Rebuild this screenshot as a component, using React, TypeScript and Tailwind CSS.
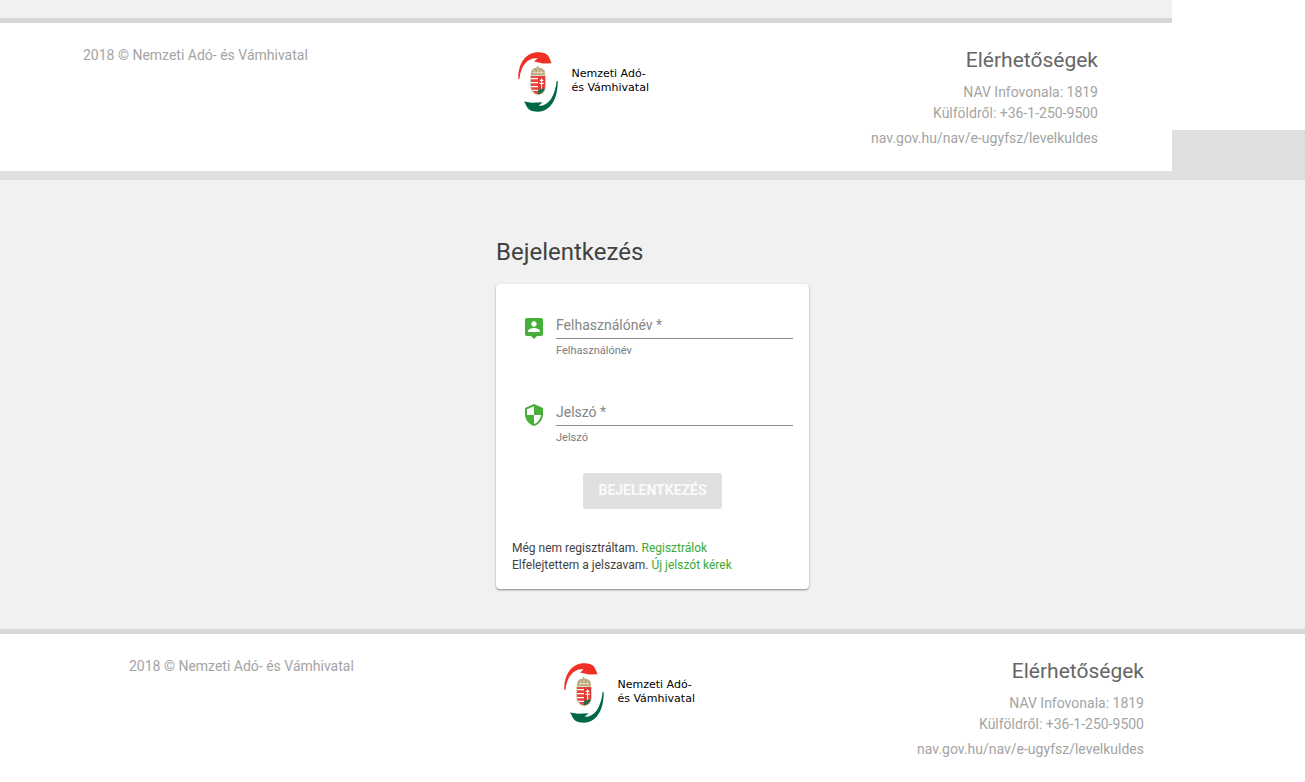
function Emblem() {
  return (
    <svg viewBox="0 0 40 60" className="h-[60px] w-10 shrink-0" aria-hidden="true">
      <path d="M0.3 27C0 10 9 0.3 20 0.3C26.5 0.3 30 2.4 31.4 6L33.6 11.2L25 11.4L16 9.6L19.6 6.4C10 5.4 3 13 1.4 27Z" fill="#ef3125" />
      <path d="M39.7 29C40 49 31 59.7 20 59.7C13 59.7 9.4 57.2 8 53L6 49.4L14 50.8L24.6 50.2L20.6 53.8C30 54.6 37 45 38.6 29Z" fill="#006747" />
      <path d="M13 23L13.4 18.6Q16 15.4 19 15.6V14H20.4V15.6Q24 15.4 26.6 18.6L27 23Z" fill="#b9a97c" />
      <path d="M14.5 20.6H25.6M16.6 18.2V22M20 16.5V22M23.4 18.2V22" stroke="#efe7cd" strokeWidth="0.7" />
      <path d="M13 24H20V42.5C15.5 41.5 13 38.5 13 34Z" fill="#e8423b" />
      <path d="M13 26.6H20M13 30.6H20M13 34.6H20M14.2 38.4H20" stroke="#fff" strokeWidth="1.3" />
      <path d="M20 24H27V34C27 38.5 24.5 41.5 20 42.5Z" fill="#df3931" />
      <path d="M20 38.5L23.5 36.4L27 36.4C26.4 40 23.6 42 20 42.5Z" fill="#22704b" />
      <path d="M23.6 26.2V36.8M21.8 28.4H25.4M21.2 31.2H26" stroke="#fff" strokeWidth="1.1" />
      <path d="M12.5 23.7H27.5V34C27.5 39 24.5 42 20 43C15.5 42 12.5 39 12.5 34Z" fill="none" stroke="#c6b489" strokeWidth="0.6" />
    </svg>
  );
}

function Footer({ inset }: { inset: string }) {
  return (
    <footer className="border-t-[5px] border-[#d7d7d7] bg-white">
      <div className={`flex h-[148px] items-start justify-between pt-[22px] text-sm text-[#a4a4a4] ${inset}`}>
        <p className="leading-5">2018 © Nemzeti Adó- és Vámhivatal</p>
        <div className="flex w-[142px] items-start gap-[13px] pt-[7px]">
          <Emblem />
          <p className="pt-[15px] font-['DejaVu_Sans',sans-serif] text-[11px] leading-[14px] whitespace-nowrap text-black">
            Nemzeti Adó-
            <br />
            és Vámhivatal
          </p>
        </div>
        <div className="text-right">
          <h2 className="text-[21px] leading-[30px] text-[#666]">Elérhetőségek</h2>
          <p className="mt-[7px] leading-[21px]">
            NAV Infovonala: 1819
            <br />
            Külföldről: +36-1-250-9500
          </p>
          <a href="https://nav.gov.hu/nav/e-ugyfsz/levelkuldes" className="mt-1 block leading-[21px]">
            nav.gov.hu/nav/e-ugyfsz/levelkuldes
          </a>
        </div>
      </div>
    </footer>
  );
}

function Field({ id, label, type, path }: { id: string; label: string; type: string; path: string }) {
  return (
    <div className="flex gap-[10px] pl-[10px]">
      <svg viewBox="0 0 24 24" className="size-6 shrink-0 fill-[#46af38]" aria-hidden="true">
        <path d={path} />
      </svg>
      <div className="min-w-0 flex-1">
        <input
          id={id}
          type={type}
          required
          placeholder={`${label} *`}
          className="block h-[23px] w-full border-b border-[#8b8b8b] bg-transparent pb-1 text-sm leading-[18px] text-[#424242] outline-none placeholder:text-[#858585]"
        />
        <label htmlFor={id} className="mt-1 block text-[11px] leading-4 text-[#7c7c7c]">
          {label}
        </label>
      </div>
    </div>
  );
}

export default function App() {
  return (
    <div className="min-h-screen bg-[#f1f1f1] font-[Roboto,sans-serif]">
      <div className="flex bg-[#dfdfdf]">
        <div className="min-w-0 flex-1">
          <div className="h-[18px] bg-[#f1f1f1]" />
          <Footer inset="pl-[83px] pr-[74px]" />
          <div className="h-[9px]" />
        </div>
        <div className="h-[130px] w-[133px] bg-white" />
      </div>

      <main className="mx-auto w-[313px] pt-14 pb-10">
        <h1 className="text-2xl leading-8 text-[#424242]">Bejelentkezés</h1>
        <form className="mt-4 rounded-[4px] bg-white px-4 pt-8 pb-[15px] shadow-[0_1px_2px_rgba(0,0,0,0.45)]">
          <Field
            id="username"
            label="Felhasználónév"
            type="text"
            path="M19 2H5c-1.11 0-2 .9-2 2v14c0 1.1.89 2 2 2h4l3 3 3-3h4c1.1 0 2-.9 2-2V4c0-1.1-.9-2-2-2zm-7 3.3c1.49 0 2.7 1.21 2.7 2.7 0 1.49-1.21 2.7-2.7 2.7-1.49 0-2.7-1.21-2.7-2.7 0-1.49 1.21-2.7 2.7-2.7zM18 16H6v-.9c0-2 4-3.1 6-3.1s6 1.1 6 3.1v.9z"
          />
          <div className="mt-11">
            <Field
              id="password"
              label="Jelszó"
              type="password"
              path="M12 1L3 5v6c0 5.55 3.84 10.74 9 12 5.16-1.26 9-6.45 9-12V5l-9-4zm0 10.99h7c-.53 4.12-3.28 7.79-7 8.94V12H5V6.3l7-3.11v8.8z"
            />
          </div>
          <div className="mt-[27px] flex justify-center">
            <button type="submit" disabled className="h-9 rounded-[3px] bg-[#e0e0e0] px-[15px] pb-[2px] text-sm font-bold text-[#fafafa]">
              BEJELENTKEZÉS
            </button>
          </div>
          <p className="mt-[31px] text-xs leading-[17px] text-[#424242]">
            Még nem regisztráltam. <a href="#regisztracio" className="text-[#3aaa35]">Regisztrálok</a>
            <br />
            Elfelejtettem a jelszavam. <a href="#uj-jelszo" className="text-[#3aaa35]">Új jelszót kérek</a>
          </p>
        </form>
      </main>

      <Footer inset="pl-[129px] pr-[161px]" />
    </div>
  );
}
